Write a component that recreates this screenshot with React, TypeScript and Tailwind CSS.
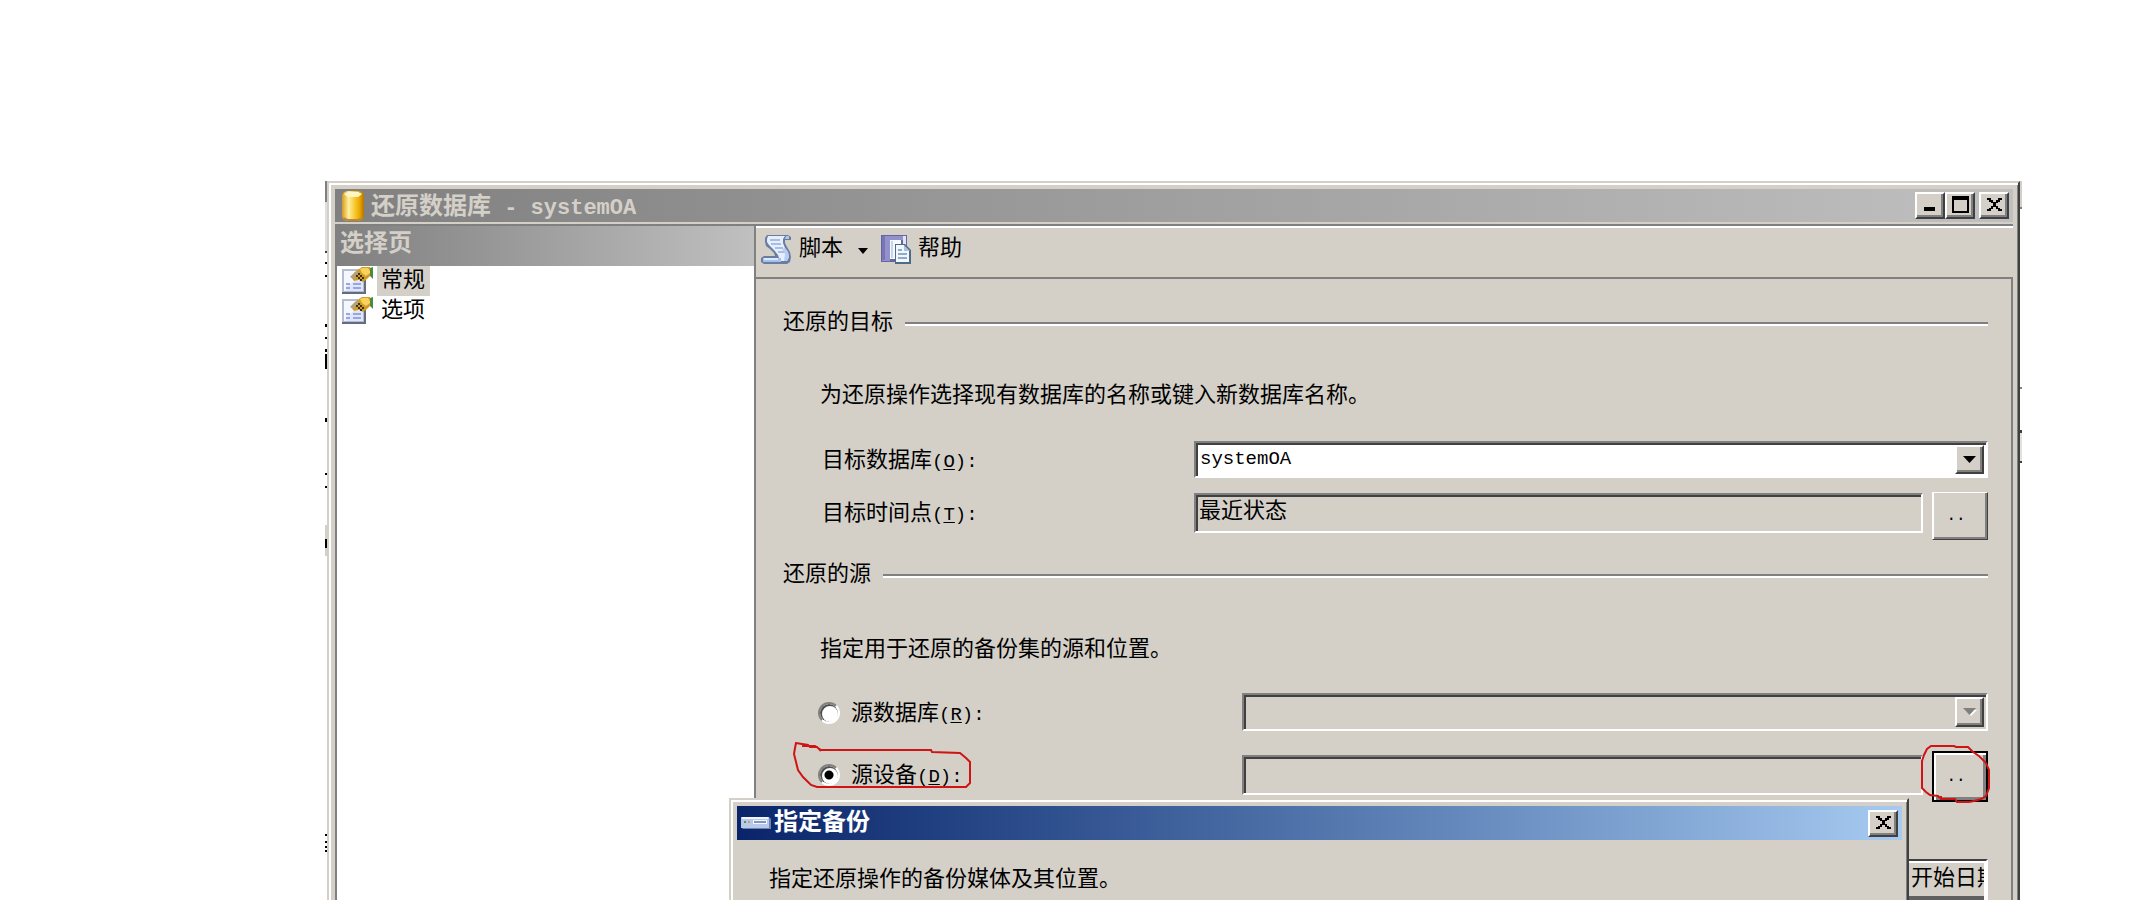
import { useState, type ReactNode } from "react";

const CJK = "font-['Liberation_Mono','Noto_Sans_CJK_SC',monospace]";
const RAISED =
  "border-2 border-t-white border-l-white border-r-[#404040] border-b-[#404040] shadow-[inset_-2px_-2px_0_#808080] bg-[#d4d0c8]";
const SUNKEN =
  "border-2 border-t-[#808080] border-l-[#808080] border-r-white border-b-white shadow-[inset_2px_2px_0_#404040]";

function DatabaseIcon() {
  return (
    <svg width="22" height="32" viewBox="0 0 22 32" aria-hidden="true">
      <defs>
        <linearGradient id="gold" x1="0" x2="1">
          <stop offset="0" stopColor="#d99a1a" />
          <stop offset="0.3" stopColor="#fff0a0" />
          <stop offset="0.6" stopColor="#f6c62c" />
          <stop offset="0.8" stopColor="#eaa800" />
          <stop offset="1" stopColor="#b87400" />
        </linearGradient>
      </defs>
      <path d="M0 5L2 2L6 1H16L20 2L22 5V27L20 30L16 31H6L2 30L0 27Z" fill="url(#gold)" />
      <path d="M2 4L6 2H16L20 4L16 7H6Z" fill="#fff6c4" />
      <path d="M1 27L6 29H16L21 27L20 30L16 31H6L2 30Z" fill="#b98a2c" />
    </svg>
  );
}

function PageIcon() {
  return (
    <svg width="31" height="27" viewBox="0 0 31 27" aria-hidden="true">
      <path d="M1 3H22V25H1Z" fill="#f4f7fe" stroke="#b4bdd0" strokeWidth="2" />
      <path d="M12 14H21V24H4V20Z" fill="#dfe6fb" />
      <path d="M0 26H23V13" fill="none" stroke="#646c80" strokeWidth="2" />
      <path d="M4 17H8M11 17H19M4 21H8M11 21H19" stroke="#98a5e0" strokeWidth="2" />
      <path d="M9 10L13 5L17 2L20 0H28V9L25 12L21 15L17 13L12 14Z" fill="#cf9d28" />
      <path d="M18 2L21 1H26L28 4V6L24 9L20 6Z" fill="#f8d25a" />
      <path d="M8 10L13 5L16 4L18 7L12 12Z" fill="#b5a078" />
      <path d="M14 8H16V10H14ZM18 8H20V10H18ZM16 6H18V8H16ZM16 10H18V12H16ZM20 10H22V12H20ZM18 12H20V14H18Z" fill="#3d3010" />
      <path d="M28 1L31 0V12L28 9Z" fill="#4c8a42" />
    </svg>
  );
}

function ScriptIcon() {
  return (
    <svg width="31" height="31" viewBox="0 0 31 31" aria-hidden="true">
      <path
        d="M6 1H27L30 3V6H24V9L26 13L29 18L30 23L29 28L26 30H3L0 28V24L3 22H14L13 19L9 15L5 12L4 8V4Z"
        fill="#6a7da0"
      />
      <path d="M7 2H24L22 5V9L24 14L27 18L28 23L26 27H19L17 21L13 16L8 11L6 8V5Z" fill="#e6efff" />
      <path d="M25 2H28V5H24Z" fill="#b3c5e6" />
      <path d="M9 6H19M10 10H20M14 14H22M17 18H24" stroke="#a9bce2" strokeWidth="2" />
      <path d="M24 14L27 18L28 23L26 27H23L24 20L21 15Z" fill="#b9cdf2" />
      <path d="M2 24H20V28H2Z" fill="#a4c0ee" />
      <path d="M3 24H17V26H3Z" fill="#dce9ff" />
    </svg>
  );
}

function HelpIcon() {
  return (
    <svg width="31" height="31" viewBox="0 0 31 31" aria-hidden="true">
      <path d="M0 1H26V28H0Z" fill="#66659f" />
      <path d="M1 2H22V6H9V27H1Z" fill="#9391cc" />
      <path d="M1 2H4V26H1Z" fill="#7875b5" />
      <path d="M22 2H25V12H22Z" fill="#dfe6f8" />
      <path d="M9 6H20V25H9Z" fill="#f6f9ff" />
      <path d="M10 7H12V24H10Z" fill="#c8d4ee" />
      <path d="M14 10H24L30 16V30H14Z" fill="#4f6a84" />
      <path d="M15 11H23V17H28V28H15Z" fill="#f0f7ff" />
      <path d="M23 11L29 17H23Z" fill="#a9c2df" />
      <path d="M17 16H21M17 20H26M17 24H26" stroke="#8fabc9" strokeWidth="2" />
    </svg>
  );
}

function DriveIcon() {
  return (
    <svg width="30" height="14" viewBox="0 0 30 14" aria-hidden="true">
      <path d="M0 1H28L30 3V13H2L0 11Z" fill="#7184ae" />
      <path d="M0 1H28V12H0Z" fill="#b9c9ec" />
      <path d="M1 1H27V3H1Z" fill="#f0f5ff" />
      <path d="M12 4H26V8H12Z" fill="#f2f6ff" />
      <path d="M13 5H25V7H13Z" fill="#8595bf" />
      <path d="M3 5H5V7H3Z" fill="#4a9a4a" />
      <path d="M7 5H9V7H7Z" fill="#c9a24a" />
    </svg>
  );
}

function CloseGlyph() {
  return (
    <svg width="15" height="13" viewBox="0 0 15 13" shapeRendering="crispEdges" aria-hidden="true">
      <path
        d="M0 0H4V2H6V4H9V2H11V0H15V2H13V4H11V5H9V8H11V10H13V11H15V13H11V11H9V9H6V11H4V13H0V11H2V10H4V8H6V5H4V4H2V2H0Z"
        fill="#000"
      />
    </svg>
  );
}

function CaptionButton({ label, children }: { label: string; children: ReactNode }) {
  return (
    <button
      type="button"
      aria-label={label}
      className={`flex h-[27px] w-[30px] shrink-0 items-center justify-center pb-0.5 ${RAISED}`}
    >
      {children}
    </button>
  );
}

function Hotkey({ letter }: { letter: string }) {
  return (
    <span className="text-[19px]">
      (<span className="underline underline-offset-2">{letter}</span>):
    </span>
  );
}

function SectionTitle({ children, className }: { children: ReactNode; className: string }) {
  return (
    <div className={`flex h-[30px] items-center gap-3 ${className}`}>
      <h2 className="shrink-0">{children}</h2>
      <div className="h-1 flex-1 border-b-2 border-b-white bg-[#808080]" />
    </div>
  );
}

function Combo({
  id,
  value,
  disabled,
  className,
}: {
  id: string;
  value: string;
  disabled?: boolean;
  className: string;
}) {
  return (
    <div className={`relative min-w-0 flex-1 ${className}`}>
      <select
        id={id}
        disabled={disabled}
        className={`h-full w-full appearance-none pb-0.5 pl-1 text-[19px] text-black opacity-100 ${SUNKEN} ${
          disabled ? "bg-[#d4d0c8]" : "bg-white"
        }`}
      >
        <option>{value}</option>
      </select>
      <span
        className={`pointer-events-none absolute top-1 right-1 bottom-1 flex w-[29px] items-center justify-center ${RAISED}`}
      >
        <svg width="14" height="8" viewBox="0 0 14 8" aria-hidden="true">
          {disabled && <path d="M2 2H14L8 8Z" fill="#fff" />}
          <path d="M0 0H13L6.500 7Z" fill={disabled ? "#808080" : "#000"} />
        </svg>
      </span>
    </div>
  );
}

const RADIO =
  "size-[22px] shrink-0 appearance-none rounded-full border-2 border-t-[#808080] border-l-[#808080] border-r-white border-b-white bg-white shadow-[inset_1px_1px_0_1px_#505050] checked:bg-[radial-gradient(circle,#000_0_4px,#fff_5px)]";

function Sidebar() {
  return (
    <nav className="flex w-[421px] shrink-0 flex-col border-x-2 border-[#808080] bg-white" aria-label="选择页">
      <div className="h-10 bg-linear-to-r from-[#808080] to-[#c0c0c0] pl-[3px] text-2xl/[38px] font-bold text-[#d4d0c8]">
        选择页
      </div>
      <ul>
        <li className="flex h-[30px] items-start gap-1 pl-[5px]">
          <span className="pt-px">
            <PageIcon />
          </span>
          <a href="#general" className="h-[30px] bg-[#d4d0c8] pr-[5px] pl-1 text-[22px]/[32px]">
            常规
          </a>
        </li>
        <li className="flex h-[30px] items-start gap-1 pl-[5px]">
          <span className="pt-px">
            <PageIcon />
          </span>
          <a href="#options" className="h-[30px] pr-[5px] pl-1 text-[22px]/[32px]">
            选项
          </a>
        </li>
      </ul>
    </nav>
  );
}

function BackupDialog() {
  return (
    <section
      aria-label="指定备份"
      className="absolute top-[615px] right-[109px] left-[400px] h-[400px] border-2 border-t-[#d4d0c8] border-r-[#404040] border-l-[#d4d0c8] bg-[#d4d0c8] shadow-[inset_2px_2px_0_#fff,inset_-1px_0_0_#808080]"
    >
      <header className="mt-[6px] mr-[5px] ml-[6px] flex h-[34px] items-center bg-linear-to-r from-[#0a246a] to-[#a6caf0] pr-1 pl-1">
        <DriveIcon />
        <h2 className="flex-1 pt-0.5 pl-[3px] text-2xl/[30px] font-bold text-white">指定备份</h2>
        <CaptionButton label="关闭">
          <CloseGlyph />
        </CaptionButton>
      </header>
      <p className="mt-[26px] pl-[38px] text-[22px]/[30px]">指定还原操作的备份媒体及其位置。</p>
    </section>
  );
}

function EdgeMarks({ marks }: { marks: [number, number, string][] }) {
  return (
    <svg className="mt-[181px] h-[719px] w-0.5 shrink-0" viewBox="0 0 2 719" aria-hidden="true">
      {marks.map(([y, h, color]) => (
        <rect key={y} x="0" y={y} width="2" height={h} fill={color} />
      ))}
    </svg>
  );
}

const LEFT_MARKS: [number, number, string][] = [
  [0, 21, "#808080"],
  [21, 49, "#dedede"],
  [70, 2, "#404040"],
  [81, 2, "#000"],
  [94, 2, "#000"],
  [143, 3, "#000"],
  [156, 2, "#000"],
  [168, 3, "#000"],
  [173, 15, "#000"],
  [237, 4, "#000"],
  [292, 2, "#000"],
  [305, 2, "#000"],
  [344, 14, "#d4d0c8"],
  [358, 9, "#000"],
  [367, 8, "#d4d0c8"],
  [653, 2, "#000"],
  [660, 2, "#000"],
  [665, 2, "#000"],
  [669, 2, "#000"],
];

const RIGHT_MARKS: [number, number, string][] = [
  [0, 26, "#d4d0c8"],
  [26, 2, "#808080"],
  [206, 2, "#808080"],
  [249, 3, "#404040"],
  [252, 28, "#e4e2de"],
  [280, 2, "#404040"],
];

export default function App() {
  const [source, setSource] = useState("device");

  return (
    <div className={`flex h-screen overflow-hidden bg-white pr-[127px] pl-[325px] text-black ${CJK}`}>
      <EdgeMarks marks={LEFT_MARKS} />
      <main className="relative mt-[181px] flex min-w-0 flex-1 flex-col border-t-2 border-r-2 border-l-2 border-t-[#d4d0c8] border-r-[#404040] border-l-[#d4d0c8] bg-[#d4d0c8] pt-[6px] pr-[5px] pl-[6px] shadow-[inset_2px_2px_0_#fff,inset_-1px_0_0_#808080]">
        <header className="flex h-[33px] shrink-0 items-center bg-linear-to-r from-[#808080] to-[#c0c0c0] pr-1 pl-[7px]">
          <DatabaseIcon />
          <h1 className="flex-1 pt-1 pl-[7px] text-[22px]/[29px] font-bold whitespace-pre text-[#d4d0c8]">
            <span className="text-2xl/[29px]">还原数据库</span> - systemOA
          </h1>
          <CaptionButton label="最小化">
            <svg width="15" height="13" viewBox="0 0 15 13" aria-hidden="true">
              <path d="M1 9H12V13H1Z" fill="#000" />
            </svg>
          </CaptionButton>
          <CaptionButton label="最大化">
            <svg width="17" height="17" viewBox="0 0 17 17" shapeRendering="crispEdges" aria-hidden="true">
              <path d="M0 0H17V17H0ZM2 4V15H15V4Z" fill="#000" fillRule="evenodd" />
            </svg>
          </CaptionButton>
          <span className="w-1" />
          <CaptionButton label="关闭">
            <CloseGlyph />
          </CaptionButton>
        </header>

        <div className="mt-0.5 flex min-h-0 flex-1 border-t-2 border-[#808080]">
          <Sidebar />
          <div className="flex min-w-0 flex-1 flex-col">
            <div className="flex h-[51px] shrink-0 items-start border-t-2 border-white pt-[6px] pl-[5px] text-[22px]/[30px]">
              <button type="button" className="flex gap-[7px]">
                <ScriptIcon />
                <span className="pt-px">脚本</span>
              </button>
              <button type="button" aria-label="脚本选项" className="ml-[15px] flex h-[34px] items-center">
                <svg width="10" height="6" viewBox="0 0 10 6" aria-hidden="true">
                  <path d="M0 0H10L5 6Z" fill="#000" />
                </svg>
              </button>
              <button type="button" className="ml-[13px] flex gap-[6px]">
                <HelpIcon />
                <span className="pt-px">帮助</span>
              </button>
            </div>

            <form className="flex min-h-0 flex-1 flex-col border-t-2 border-r-2 border-[#808080] pr-[23px] pl-[27px] text-[22px]/[30px]">
              <SectionTitle className="mt-[30px]">还原的目标</SectionTitle>
              <p className="mt-[43px] pl-[37px]">为还原操作选择现有数据库的名称或键入新数据库名称。</p>
              <div className="mt-[29px] flex shrink-0 items-center">
                <label htmlFor="target-db" className="w-[411px] shrink-0 pt-1 pl-[39px]">
                  目标数据库
                  <Hotkey letter="O" />
                </label>
                <Combo id="target-db" value="systemOA" className="h-[37px]" />
              </div>
              <div className="mt-3.5 flex shrink-0 items-start">
                <label htmlFor="target-time" className="w-[411px] shrink-0 pt-2 pl-[39px]">
                  目标时间点
                  <Hotkey letter="T" />
                </label>
                <input
                  id="target-time"
                  readOnly
                  defaultValue="最近状态"
                  className={`mt-px h-10 min-w-0 flex-1 bg-[#d4d0c8] pb-2.5 pl-[3px] ${SUNKEN}`}
                />
                <button
                  type="button"
                  aria-label="选择时间点"
                  className="ml-[9px] h-12 w-14 shrink-0 border border-t-white border-r-[#404040] border-b-[#404040] border-l-white bg-[#d4d0c8] pr-2 text-base shadow-[inset_1px_0_0_#fff,inset_-2px_-2px_0_#808080]"
                >
                  ..
                </button>
              </div>

              <SectionTitle className="mt-[21px]">还原的源</SectionTitle>
              <p className="mt-[45px] pl-[37px]">指定用于还原的备份集的源和位置。</p>
              <div className="mt-[27px] flex shrink-0 items-center">
                <label className="flex w-[459px] shrink-0 items-center gap-[11px] pt-0.5 pl-[35px]">
                  <input
                    type="radio"
                    name="source"
                    className={RADIO}
                    checked={source === "database"}
                    onChange={() => setSource("database")}
                  />
                  <span className="pt-1">
                    源数据库
                    <Hotkey letter="R" />
                  </span>
                </label>
                <Combo id="source-db" value="" disabled className="h-[38px]" />
              </div>
              <div className="mt-5 flex shrink-0 items-start">
                <label className="relative mt-[7px] flex w-[459px] shrink-0 items-center gap-[11px] pl-[35px]">
                  <input
                    type="radio"
                    name="source"
                    className={RADIO}
                    checked={source === "device"}
                    onChange={() => setSource("device")}
                  />
                  <span className="pt-1">
                    源设备
                    <Hotkey letter="D" />
                  </span>
                  <svg
                    className="pointer-events-none absolute -top-4 left-[7px]"
                    width="190"
                    height="50"
                    viewBox="0 0 190 50"
                    fill="none"
                    stroke="#d01414"
                    strokeWidth="2"
                    aria-hidden="true"
                  >
                    <path d="M31 9L27 5L20 5L18 3L6 1L5 6L4 12L6 20L8 28L13 35L17 39L21 43L27 45H176L180 41V20L176 16L170 11L142 10L141 8H31L25 4H12" />
                  </svg>
                </label>
                <input
                  aria-label="源设备"
                  readOnly
                  className={`mt-1 h-10 min-w-0 flex-1 bg-[#d4d0c8] ${SUNKEN}`}
                />
                <div className="relative ml-[9px] shrink-0">
                  <button
                    type="button"
                    aria-label="浏览设备"
                    className="block h-[51px] w-14 border-2 border-black bg-[#d4d0c8] pr-2 text-base shadow-[inset_2px_2px_0_#fff,inset_-3px_-3px_0_#808080]"
                  >
                    ..
                  </button>
                  <svg
                    className="pointer-events-none absolute -top-[9px] -left-[13px]"
                    width="74"
                    height="64"
                    viewBox="0 0 74 64"
                    fill="none"
                    stroke="#d01414"
                    strokeWidth="2"
                    aria-hidden="true"
                  >
                    <path d="M21 56L19 54L11 53L7 50L3 46V19L5 13L8 7L12 4H35L37 5H49L54 10L60 14L67 21L70 28V46L67 54L62 57L55 59L50 60H38L36 57H22V54" />
                  </svg>
                </div>
              </div>

              <div className="mt-[57px] min-h-0 flex-1 overflow-hidden border-t-2 border-r-2 border-t-[#404040] border-r-white bg-white pr-0.5">
                <table className="w-full table-fixed border-collapse">
                  <thead>
                    <tr>
                      <td className="bg-[#d4d0c8]" />
                      <th
                        scope="col"
                        className="h-9 w-[77px] overflow-hidden border-t-2 border-b-4 border-t-white border-b-[#606060] bg-[#d4d0c8] pt-px pl-[4px] text-left font-normal whitespace-nowrap"
                      >
                        开始日期
                      </th>
                    </tr>
                  </thead>
                </table>
              </div>
            </form>
          </div>
        </div>

        <BackupDialog />
      </main>
      <EdgeMarks marks={RIGHT_MARKS} />
    </div>
  );
}
